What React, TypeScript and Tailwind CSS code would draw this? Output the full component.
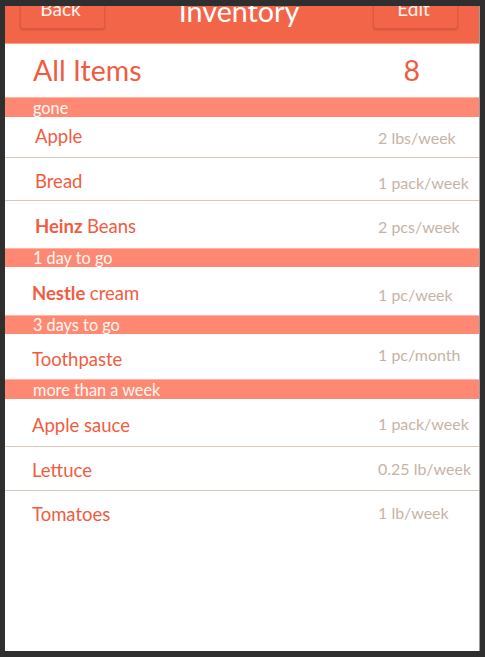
type Row = {
  kind: "item";
  brand?: string;
  name: string;
  value: string;
  h: string;
  pl: string;
  nameMt: string;
  valMt: string;
  divider?: boolean;
};

type Bar = { kind: "bar"; label: string; h: string };

const rows: (Row | Bar)[] = [
  { kind: "bar", label: "gone", h: "h-[20px]" },
  { kind: "item", name: "Apple", value: "2 lbs/week", h: "h-[41px]", pl: "pl-[30px]", nameMt: "mt-[8px]", valMt: "mt-[11px]", divider: true },
  { kind: "item", name: "Bread", value: "1 pack/week", h: "h-[43px]", pl: "pl-[30px]", nameMt: "mt-[12px]", valMt: "mt-[15px]", divider: true },
  { kind: "item", brand: "Heinz", name: "Beans", value: "2 pcs/week", h: "h-[47px]", pl: "pl-[30px]", nameMt: "mt-[14px]", valMt: "mt-[16px]" },
  { kind: "bar", label: "1 day to go", h: "h-[19px]" },
  { kind: "item", brand: "Nestle", name: "cream", value: "1 pc/week", h: "h-[48px]", pl: "pl-[27px]", nameMt: "mt-[15px]", valMt: "mt-[18px]" },
  { kind: "bar", label: "3 days to go", h: "h-[19px]" },
  { kind: "item", name: "Toothpaste", value: "1 pc/month", h: "h-[45px]", pl: "pl-[27px]", nameMt: "mt-[14px]", valMt: "mt-[11px]" },
  { kind: "bar", label: "more than a week", h: "h-[20px]" },
  { kind: "item", name: "Apple sauce", value: "1 pack/week", h: "h-[48px]", pl: "pl-[27px]", nameMt: "mt-[15px]", valMt: "mt-[15px]", divider: true },
  { kind: "item", name: "Lettuce", value: "0.25 lb/week", h: "h-[44px]", pl: "pl-[27px]", nameMt: "mt-[12px]", valMt: "mt-[12px]", divider: true },
  { kind: "item", name: "Tomatoes", value: "1 lb/week", h: "h-[48px]", pl: "pl-[27px]", nameMt: "mt-[12px]", valMt: "mt-[12px]" },
];

function HeaderButton({ label }: { label: string }) {
  return (
    <div className="flex h-[34px] w-[85px] items-end justify-center rounded-[3px] border border-[#e2583e] bg-[#f26549] pb-[8px] pr-[4px] text-[19px] leading-[22px] text-[#fff3ee] shadow-[0_1px_2px_rgba(0,0,0,0.18)]">
      {label}
    </div>
  );
}

export default function App() {
  return (
    <div
      className="h-[657px] w-[485px] bg-[#2f2f2f] pl-[5px] pt-[6px]"
      style={{ fontFamily: "Lato, 'Open Sans', sans-serif" }}
    >
      <div className="flex h-[645px] w-[475px] flex-col border-r border-[#9a9a9a] bg-white">
        {/* header, scrolled a little past its top */}
        <div className="h-[38px] overflow-hidden border-b border-[#f8a494] bg-[#f26549]">
          <div className="-mt-[11px] flex items-start justify-between pl-[15px] pr-[21px]">
            <HeaderButton label="Back" />
            <div className="-mt-[1px] text-[28.7px] leading-[34px] text-white">Inventory</div>
            <HeaderButton label="Edit" />
          </div>
        </div>

        <div className="flex h-[53px] items-center justify-between pl-[28px] pr-[59px] text-[28.5px] text-[#f05c41]">
          <span>All Items</span>
          <span>8</span>
        </div>

        {rows.map((r, i) =>
          r.kind === "bar" ? (
            <div
              key={i}
              className={`${r.h} flex items-center border-t border-[#ffb4a4] bg-[#ff8872] pl-[28px] text-[16.3px] leading-[18px] text-[#fff8f5]`}
            >
              {r.label}
            </div>
          ) : (
            <div
              key={i}
              className={`${r.h} ${r.divider ? "border-b border-[#d9c8ba]" : ""} flex items-start`}
            >
              <div className={`${r.pl} ${r.nameMt} flex-1 text-[18.5px] leading-[22px] text-[#f05c41]`}>
                {r.brand && <span className="font-bold">{r.brand} </span>}
                {r.name}
              </div>
              <div className={`${r.valMt} w-[101px] text-[16px] leading-[20px] text-[#c7b3a4]`}>
                {r.value}
              </div>
            </div>
          )
        )}
      </div>
    </div>
  );
}
